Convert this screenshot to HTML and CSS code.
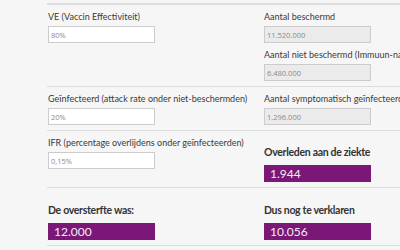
FILE: index.html
```html
<!DOCTYPE html>
<html lang="nl">
<head>
  <meta charset="UTF-8" />
  <meta name="viewport" content="width=device-width, initial-scale=1.0" />
  <title>Oversterfte rekenhulp</title>
  <link rel="stylesheet" href="styles.css">
</head>
<body>
  <section class="calc">
    <div class="row">
      <div class="col">
        <label for="ve">VE (Vaccin Effectiviteit)</label>
        <input type="text" id="ve" value="80%">
      </div>
      <div class="col">
        <label for="beschermd">Aantal beschermd</label>
        <input type="text" id="beschermd" value="11.520.000" readonly>
        <label class="next" for="niet-beschermd">Aantal niet beschermd (Immuun-naïef)</label>
        <input type="text" id="niet-beschermd" value="6.480.000" readonly>
      </div>
    </div>

    <div class="row">
      <div class="col">
        <label for="attack">Geïnfecteerd (attack rate onder niet-beschermden)</label>
        <input type="text" id="attack" value="20%">
      </div>
      <div class="col">
        <label for="symptomatisch">Aantal symptomatisch geïnfecteerden</label>
        <input type="text" id="symptomatisch" value="1.296.000" readonly>
      </div>
    </div>

    <div class="row">
      <div class="col">
        <label for="ifr">IFR (percentage overlijdens onder geïnfecteerden)</label>
        <input type="text" id="ifr" value="0,15%">
      </div>
      <div class="col">
        <h3>Overleden aan de ziekte</h3>
        <div class="result">1.944</div>
      </div>
    </div>

    <div class="row">
      <div class="col">
        <h3>De oversterfte was:</h3>
        <div class="result">12.000</div>
      </div>
      <div class="col">
        <h3>Dus nog te verklaren</h3>
        <div class="result">10.056</div>
      </div>
    </div>
  </section>
</body>
</html>
```

FILE: styles.css
```css
* {
  margin: 0;
  padding: 0;
  box-sizing: border-box;
}

body {
  font-family: Lato, "Open Sans", sans-serif;
  background: #f6f6f6;
  color: #333;
  overflow: hidden;
}

.calc {
  margin: 3px 0 0 47px;
  width: 480px;
}

.row {
  display: grid;
  grid-template-columns: 216px 216px;
  border-top: 1px solid #ddd;
  padding: 5px 0 5px 1px;
}

.row:first-child {
  border-top-width: 2px;
}

.row:last-child {
  border-bottom: 1px solid #ddd;
}

.col label {
  display: block;
  font-size: 9px;
  line-height: 13px;
  margin-bottom: 3px;
  color: #3a3a3a;
  white-space: nowrap;
}

.col label.next {
  margin-top: 5px;
}

.col input {
  display: block;
  width: 107px;
  height: 17px;
  padding: 0 2px;
  border: 1px solid #ccc;
  background: #fff;
  font-family: "Open Sans", sans-serif;
  font-size: 7.5px;
  color: #8a8a8a;
  outline: none;
}

.col input[readonly] {
  background: #ebebeb;
}

.col h3 {
  font-size: 10.5px;
  line-height: 16px;
  font-weight: 700;
  letter-spacing: -0.3px;
  margin: 8px 0 5px;
  color: #333;
}

.row:last-child h3 {
  margin-top: 9px;
}

.result {
  width: 107px;
  height: 17px;
  line-height: 17px;
  padding-left: 6px;
  background: #7b1777;
  color: #f4eef4;
  font-size: 12px;
}
```
